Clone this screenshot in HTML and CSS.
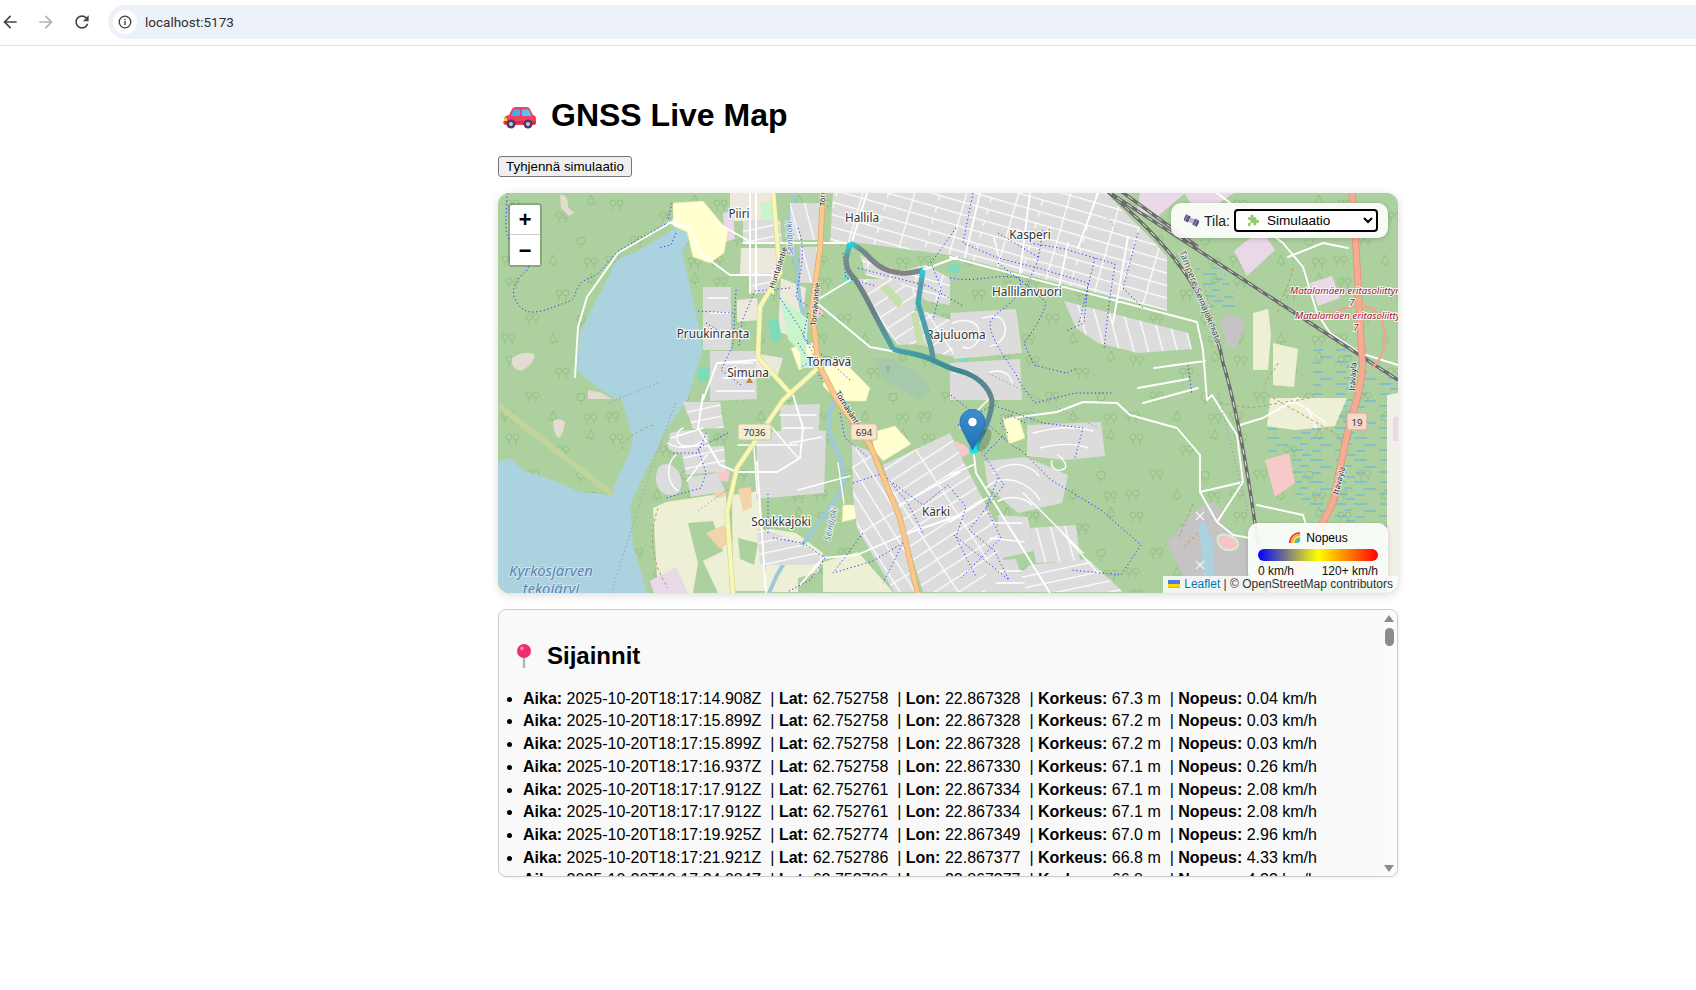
FILE: index.html
```html
<!DOCTYPE html>
<html lang="fi">
<head>
<meta charset="utf-8">
<title>GNSS Live Map</title>
<link rel="stylesheet" href="styles.css">
</head>
<body>
<header class="browser-bar">
  <svg class="nav-icon" viewBox="0 0 24 24"><path class="ic-dark" d="M20 11H7.83l5.59-5.59L12 4l-8 8 8 8 1.41-1.41L7.83 13H20v-2z"/></svg>
  <svg class="nav-icon" viewBox="0 0 24 24"><path class="ic-off" d="M4 11h12.17l-5.59-5.59L12 4l8 8-8 8-1.41-1.41L16.17 13H4v-2z"/></svg>
  <svg class="nav-icon" viewBox="0 0 24 24"><path class="ic-dark" d="M17.65 6.35C16.2 4.9 14.21 4 12 4c-4.42 0-7.99 3.58-7.99 8s3.57 8 7.99 8c3.73 0 6.84-2.55 7.73-6h-2.08c-.82 2.33-3.04 4-5.65 4-3.31 0-6-2.69-6-6s2.69-6 6-6c1.66 0 3.14.69 4.22 1.78L13 11h7V4l-2.35 2.35z"/></svg>
  <div class="address">
    <span class="site-info"><svg viewBox="0 0 16 16" class="info-icon"><circle cx="8" cy="8" r="5.8" class="ic-ring"/><rect x="7.3" y="7" width="1.4" height="4" class="ic-fill"/><rect x="7.3" y="4.8" width="1.4" height="1.4" class="ic-fill"/></svg></span>
    <span class="url">localhost:5173</span>
  </div>
</header>

<main class="page">
  <h1 class="title">
    <svg class="car" viewBox="0 0 33 23"><path fill="#f4405c" d="M1 13c0-2 2-3.500 5-4l3-6c.6-1.300 2-2 3.500-2h11c1.500 0 2.800.700 3.500 2l3 6c2 .600 3 1.800 3 3.500V17c0 1-.800 2-2 2H3c-1.200 0-2-1-2-2z"/><path fill="#3fb0f5" d="M11 3.500h6v6.500H8z"/><path fill="#55c4fb" d="M19 3.500h5.500c.6 0 1 .3 1.300.8L28.500 10H19z"/><rect x="1" y="12" width="3" height="3" fill="#ffc83d"/><rect x="0.500" y="15" width="32" height="3" fill="#d92d4a"/><circle cx="8" cy="18" r="4.500" fill="#4b3a63"/><circle cx="8" cy="18" r="2" fill="#cfc6dc"/><circle cx="25" cy="18" r="4.500" fill="#4b3a63"/><circle cx="25" cy="18" r="2" fill="#cfc6dc"/></svg>
    <span>GNSS Live Map</span>
  </h1>
  <button class="clear-btn" type="button">Tyhjennä simulaatio</button>

  <section class="map">
    <svg class="tiles" viewBox="0 0 900 400" aria-hidden="true">
      <defs>
        <g id="t2"><circle cx="3" cy="4" r="3"/><circle cx="10" cy="4" r="3"/><path d="M3 7v5M10 7v5"/></g>
        <g id="t1"><path d="M5 0l4 9H1zM5 9v3"/></g>
        <g id="t3"><circle cx="5" cy="4" r="4"/><path d="M5 8v4"/></g>
        <pattern id="forest" width="104" height="78" patternUnits="userSpaceOnUse">
          <g class="tree">
            <use href="#t2" x="8" y="6"/><use href="#t2" x="58" y="18"/><use href="#t1" x="88" y="2"/>
            <use href="#t2" x="28" y="42"/><use href="#t3" x="78" y="44"/><use href="#t2" x="86" y="64"/><use href="#t1" x="50" y="62"/><use href="#t2" x="4" y="62"/>
          </g>
        </pattern>
        <pattern id="marsh" width="44" height="22" patternUnits="userSpaceOnUse">
          <path class="marsh-line" d="M2 3h10M20 3h13M10 9h8M30 10h12M1 15h12M22 16h9M12 20h9"/>
        </pattern>
        <pattern id="st17" width="50" height="12" patternUnits="userSpaceOnUse" patternTransform="rotate(16)">
          <rect width="50" height="12" class="res"/><path class="street" d="M0 .6h50M.6 0v12M25.600 0v6"/>
        </pattern>
        <pattern id="stN35" width="42" height="13" patternUnits="userSpaceOnUse" patternTransform="rotate(-33)">
          <rect width="42" height="13" class="res"/><path class="street" d="M0 .6h42M.6 0v13"/>
        </pattern>
        <pattern id="st55" width="60" height="13" patternUnits="userSpaceOnUse" patternTransform="rotate(58)">
          <rect width="60" height="13" class="res"/><path class="street" d="M0 .6h60M.6 0v13"/>
        </pattern>
        <pattern id="st75" width="36" height="14" patternUnits="userSpaceOnUse" patternTransform="rotate(75)">
          <rect width="36" height="14" class="res"/><path class="street" d="M0 .6h36"/>
        </pattern>
        <pattern id="st0" width="50" height="11" patternUnits="userSpaceOnUse" patternTransform="rotate(-12)">
          <rect width="50" height="11" class="res"/><path class="street" d="M0 .6h50"/>
        </pattern>
        <linearGradient id="rg1" gradientUnits="userSpaceOnUse" x1="352" y1="50" x2="402" y2="80"><stop offset="0" stop-color="#1fd7e3"/><stop offset=".2" stop-color="#748a8e"/><stop offset="1" stop-color="#857f80"/></linearGradient>
        <linearGradient id="rg2" gradientUnits="userSpaceOnUse" x1="402" y1="80" x2="425" y2="77"><stop offset="0" stop-color="#857f80"/><stop offset=".85" stop-color="#6d8d92"/><stop offset="1" stop-color="#1fd7e3"/></linearGradient>
        <linearGradient id="rg3" gradientUnits="userSpaceOnUse" x1="425" y1="77" x2="435" y2="164"><stop offset="0" stop-color="#1fd7e3"/><stop offset=".15" stop-color="#5f9aa3"/><stop offset=".35" stop-color="#3fa9b6"/><stop offset="1" stop-color="#5d949b"/></linearGradient>
        <linearGradient id="rg4" gradientUnits="userSpaceOnUse" x1="352" y1="50" x2="395" y2="157"><stop offset="0" stop-color="#1fd7e3"/><stop offset=".12" stop-color="#76898c"/><stop offset=".6" stop-color="#687f84"/><stop offset="1" stop-color="#47a3ad"/></linearGradient>
        <linearGradient id="rg5" gradientUnits="userSpaceOnUse" x1="395" y1="157" x2="476" y2="257"><stop offset="0" stop-color="#47a3ad"/><stop offset=".45" stop-color="#3d8790"/><stop offset=".8" stop-color="#66888c"/><stop offset=".95" stop-color="#4c8f98"/><stop offset="1" stop-color="#19dfe6"/></linearGradient>
        <linearGradient id="pinfill" x1="0" y1="0" x2="0" y2="1"><stop offset="0" stop-color="#3f8fd0"/><stop offset="1" stop-color="#1f6fb2"/></linearGradient>
      </defs>

      <rect class="land" width="900" height="400"/>
      <rect fill="url(#forest)" width="900" height="400"/>

      <!-- marsh -->
      <path fill="url(#marsh)" d="M695 67l30 10 18 38-30 0zM815 154l50 0 35 30v25h-85zM769 202h120v135l-50 0-70-60z"/>

      <!-- farmland and light ground -->
      <path class="farm" d="M155 315l13-6 60-9 4 100h-72zM234 302l28-4 6 100h-33zM268 335l30 5 27 20-10 39h-47zM325 369l35-10 35 40h-70zM755 120l15-4 3 25-3 36h-15zM775 150l25 6-4 38-21-2zM772 205l77 0-12 28-40 4-28-4z"/>
      <path class="farm-green" d="M190 330l25-2 10 30-20 10 15 32h-25l5-30zM240 345l20 5-4 22-14-6zM300 385l20-6 4 20h-24z"/>
      <path class="beige" d="M232 0h43l5 28h-48zM243 55h35l4 26h-40zM239 107l20-2 2 22-22 2zM283 85l25 10-6 50-22-6zM255 160l30 5-6 20-25-8z"/>
      <path class="beige-light" d="M889 202l11-2v200h-11z"/>
      <path class="lilac" d="M152 388l26-14 12 26h-34zM642 0h45l-28 24-20-6zM686 0h50l-18 12-24 0zM736 58l27-22 14 21-28 26zM812 90l22-7 8 22-22 8zM895 225l5-2v25h-5zM225 20l10-2 2 28-10 3z"/>

      <!-- water -->
      <path class="water" d="M177 35L189 33 194 40 184 60 192 94 200 130 205 157 199 174 189 207 169 235 149 275 132 312 135 352 149 400H0V269L12 265 25 277 59 289 82 299 112 302 132 259 135 245 122 202 119 207 100 195 79 177 82 140 95 114 119 67 142 57z"/>
      <path class="water-thin" d="M297 3c-8 18-6 40 0 60 4 18 2 40 8 58l5 40 20 28M337 205c-5 10-9 25-4 40 4 12 16 26 12 45-3 14-12 22-22 36-10 15-18 28-32 36l-12 20-8 18"/>
      <path class="rock" d="M14 165c6-5 14-6 22-4 2 6-5 12-11 16-6 2-13-4-11-12zM55 228c4-3 9-2 12 1-1 6-2 13-6 16-4-2-6-10-6-17zM62 2c6-2 9 6 8 12l6 6-5 3-8-8zM90 197l14 3 10 6H90z"/>

      <!-- retail, parks -->
      <path class="retail" d="M175 10l30-2 25 30-4 22-14 10-17-6-6-25-14-6zM325 174l22-4 25 25-4 13h-28l-15-15zM375 239l22-6 16 18-28 17-10-12zM293 155l25-6 5 18-22 10zM345 312h21l-2 12-20 5zM505 225l16 0 6 20-16 6zM608 58l14-3 2 10-14 5z"/>
      <path class="park" d="M262 10l13-2 4 28-14 2zM282 104l28 22-2 40-18-20zM300 130l10 35 18 10-25 0z"/>
      <path class="teal" d="M270 128l10-4 4 22-10 4zM200 175l12-2-2 16-10 0zM346 80l10 1-2 10-8-2zM438 28l15-2 2 8-14 3zM543 45l11 3-2 7-11-2zM570 70l8 2-1 5-8-2zM470 20l14 3-2 6-12-2zM458 160l14 2-2 8-12-3zM452 70l12 2-4 9-10-3zM445 310l16-6-2 12-12 4z"/>
      <path class="pink" d="M219 276l13 2-2 11-14-2zM456 248l11 4 6 7-10 6-13-11zM767 267l24-7 6 30-20 14zM312 110l14 10-6 5-10-6zM526 0l10 0-3 17-9-2zM420 322l12-2 2 8-12 3z"/>
      <path class="tan" d="M215 296l10-1 4 8-12 2zM240 296l13-2 1 20-9 4zM208 340l18-8 8 16-12 8z"/>

      <!-- residential blocks with street grids -->
      <path fill="url(#st17)" d="M452 0H609C630 25 655 45 669 64V118L452 62zM335 0H452V62L354 49 332 50zM362 62L385 72 402 78 428 72 452 85V112L429 108 400 90 368 82z"/>
      <path fill="url(#stN35)" d="M355 86L394 86 422 103 416 118 440 150 400 152 385 132zM405 118L425 118 462 130V165L437 160 425 150zM385 272L452 240 462 262 505 345V399H425L405 335z"/>
      <path fill="url(#st55)" d="M354 252L375 259 405 335 419 399H396L359 335 355 302z"/>
      <path fill="url(#st75)" d="M566 108L690 140 694 156 640 160 600 150 578 135zM292 10L322 10 320 47 292 47zM302 54L322 54 317 90 302 90zM532 335L578 332 582 368 538 370z"/>
      <path fill="url(#st0)" d="M185 209L222 209 226 235 195 236zM183 255L226 253 228 278 188 282zM245 27h37l2 23h-39zM252 80h23v20h-23zM259 335L283 342 320 360 325 372 262 372zM532 372L590 366 625 399H500z"/>

      <!-- curvy neighbourhoods -->
      <path class="res" d="M172 240c12-4 32-4 38 2 2 8-4 16-16 18-10 2-22 0-24-6zM160 276c4-8 14-6 20 2 6 10 4 22-4 24-14 2-22-12-16-26zM189 284l30-4 8 18-34 6zM259 240l44-4 25 2-2 62-68 6zM282 212l40-1-2 42-36 2zM205 94h28v63h-28zM212 158l45 0 2 48-47 2zM452 120l66-4 6 44-68 6zM452 170l70-4 2 41h-72zM529 232l74-3 4 34-40 4-38-4zM486 268l42-4 42 18-6 28-44 10-30-26zM500 322l30 2 6 34-36 8zM488 368l30-2 10 33h-40z"/>

      <path class="quarry" d="M669 349L700 315 715 309 726 320 722 330 749 349V399H692zM722 130L730 120 742 124 747 130 739 154 730 154z"/>
      <path class="water" d="M701 330l7 0 2 10-7 4-3-7zM702 345l12-5 3 50 14 10h-24z"/>
      <path class="green-ov" d="M413 120l6 0 8 32-8 0zM382 95l8-4 15 18-5 6z"/>
      <path class="cemetery" d="M374 165L395 166 425 185 433 198 422 207 385 187z"/>

      <!-- curved local streets -->
      <path class="road-w" d="M185 235c-8 4-8 14 0 18h26M178 262c-10 8-10 28 2 36M209 262l-20 26M170 250c8 6 26 6 34-2M240 252h60M255 240l4 60M270 230l30 35M282 222h36M285 235h30M292 250l32-6M210 105h20M212 120h20M214 140h18M220 170h35M225 185h30M218 198h38M455 130c8-4 24-4 26 8 2 12-8 20-16 16M485 125c10-3 20-3 22 8s-6 18-14 20M456 180c12-4 24-2 26 12M490 180c10-4 22-2 24 10M535 240c20-5 40-8 60-2M542 255c16-4 32-6 48 0M495 280c14-12 34-12 46 3M488 295c14-14 40-10 54 12M500 308c12-6 26-4 34 4M492 330l32 0M492 345l34 4M500 378h24M498 390h28M560 262c6 4 10 12 6 14-8 4-14-2-12-8"/>
      <!-- main streets -->
      <path class="road-w2" d="M177 27L120 60 89 104 80 134 77 184M169 29L192 35 202 60 232 82H275M219 30L249 47M245 50H325L352 50M354 49L369 0M425 77L459 64M319 110L372 154 425 164M319 107L352 87M219 170L259 167M219 170L205 207M252 0V100M258 0V100M275 82V100M205 202L200 235 222 272 239 279H279L302 265 305 235 295 202M259 269L268 399M462 279L402 312M462 322L405 342 359 362 325 365 302 392M476 262L478 280 552 400M452 282L475 272M452 329L489 305M452 64L699 129 705 157 709 207 714 202 739 242 745 289 719 329 735 342 752 345M702 262L702 299 719 329M702 299L745 289M559 219L585 209 619 210 632 222 679 235 702 262M514 225L559 219M759 312L805 322 809 335M742 232L765 225 800 205M719 0L785 50 805 74 819 120 832 140 862 160 900 172M482 0L467 64M532 0L522 80M630 44L615 130M570 50L560 100M600 0L580 55M640 195L690 186M656 175L707 168M645 210L700 195M790 64L825 50 850 55"/>
      <path class="road-w" d="M492 205l-30 30M500 62l-4-18M205 235l-32 10M340 270l6 40M300 297l52-14M525 300l60 60M600 380l-40-45M780 210l20 0 28 20M810 215l8 20"/>

      <!-- dotted footpaths -->
      <path class="foot" d="M174 10L169 30 122 57C108 68 105 80 92 85 75 90 80 105 72 108 45 118 30 126 19 110 13 100 14 90 29 77 37 65 30 45 12 47 5 40 9 20 9 0M178 40l-5 12-13 3M292 95l-35 3-13 30-3 25M300 35c10 25 0 50 -2 70l30 20M310 120l-5 25 25 22 22 20M238 97l-3 55-12 25 20 15M230 240l-30 15 8 25-5 15 -35 10M175 260l25 0 8-20M342 220l5 25 12 10 12 10M355 290l30-10 25 30 15 30M365 340l-30 40 40-12 30-18 -20 40M275 345l30 5 22 15-15 22-23 12M270 340l0-40M458 35l-25 35 10 25 -8 32M360 75l30 8 40 10 35 20M475 0l-10 50 35 15 40 10 50 15 -4 40-18 8M532 50l35 6 50 15-6 40-5 45M500 70c25 20 40 30 48 40-5 18-15 30-22 40l10 22 32 8 12-5M452 85c30 5 45-5 70 0 5 25-25 30-30 45 0 20 25 45 30 60l15 20 40-10 38 0M545 37l-5 30-15 35M500 40l40 24M597 65l-16 65M640 40l-15 55 20 20M453 202l30 25c20 12 25 25 40 30l30 30 50 30 40 35 -20 30 -50-5M456 342l55 45 -15-30 -25-20 35-45-20-30 20-20M690 172l4 30M460 232l35-20 50 18 40 5-8 30M510 240l-8-10 10-8 15 8M395 290l30 22 25-20 18 22 -10 30 20 40M345 60l3 25 30 8M282 105l20 30 15 30 -15 10M200 118l35 2M208 130l25 15M300 150l26 40M500 285l-12 30 15 30-40 40"/>
      <path class="path-brown" d="M155 232c-15 5-35 18-30 24M160 315c-10 30-6 55 10 80M795 75c-5 25-15 30-15 45M780 170c-4 10-12 14-14 25M700 340l-14 14M695 311l-15 35M770 202l70 40M722 210l30 5 60-10"/>
      <path class="path-grey" d="M178 210c-25 60-45 130-65 190M160 190l-50 20M610 25l10 15M490 180l50 25 60 30M705 90l20 70M720 200l30 120M200 318l30-22"/>
      <path class="meadow" d="M0 212L115 302"/>

      <!-- railways -->
      <path class="rail" d="M609 -2C670 50 712 100 725 170 733 195 745 250 754 310 758 340 764 370 768 400"/>
      <path class="rail-in" d="M609 -2C670 50 712 100 725 170 733 195 745 250 754 310 758 340 764 370 768 400"/>
      <path class="rail" d="M609 -2L900 187M620 -4L700 54"/>
      <path class="rail-in" d="M609 -2L900 187M620 -4L700 54"/>

      <!-- main roads -->
      <path class="trunk-c" d="M854 0L858 55 864 164C866 180 862 190 860 202L849 242 835 309 822 335 785 400"/>
      <path class="trunk" d="M854 0L858 55 864 164C866 180 862 190 860 202L849 242 835 309 822 335 785 400"/>
      <path class="ramp" d="M825 127c10-8 25-14 35-14 15 0 22 6 26 22 3 15-1 30-12 40"/>
      <path class="ter-c" d="M275 -2L282 80 262 114 260 164 292 200M320 175L285 207 239 275 229 319 235 402"/>
      <path class="ter" d="M275 -2L282 80 262 114 260 164 292 200M320 175L285 207 239 275 229 319 235 402"/>
      <path class="sec-c" d="M325 -2L322 57 314 114 320 170 339 207 372 252 402 325 420 402"/>
      <path class="sec" d="M325 -2L322 57 314 114 320 170 339 207 372 252 402 325 420 402"/>

      <!-- small map symbols -->
      <path class="peak" d="M248 190l3.500-6 3.500 6z"/>
      <path class="symbol-w" d="M698 319l8 8M706 319l-8 8M698 368l8 8M706 368l-8 8"/>
      <path class="track" d="M722 342c6-2 16 2 18 8 1 6-8 9-14 6-6-2-9-12-4-14z"/>
      <path class="cross" d="M390 172v8M387 175h6"/>

      <!-- labels -->
      <g class="lbl">
        <text x="241" y="25">Piiri</text>
        <text x="364" y="29">Hallila</text>
        <text x="215" y="145">Pruukinranta</text>
        <text x="331" y="173">Törnävä</text>
        <text x="250" y="184">Simuna</text>
        <text x="458" y="146">Rajuluoma</text>
        <text x="529" y="103">Hallilanvuori</text>
        <text x="532" y="46">Kasperi</text>
        <text x="283" y="333">Soukkajoki</text>
        <text x="438" y="323">Kärki</text>
      </g>
      <g class="lbl-water">
        <text x="53" y="383">Kyrkösjärven</text>
        <text x="53" y="401">tekojärvi</text>
      </g>
      <text class="lbl-river" transform="translate(295 62) rotate(-92)">Seinäjoki</text>
      <text class="lbl-river" transform="translate(332 348) rotate(-78)">Seinäjoki</text>
      <g class="lbl-road">
        <text transform="translate(276 96) rotate(-72)">Huntalantie</text>
        <text transform="translate(318 133) rotate(-85)">Törnäväntie</text>
        <text transform="translate(337 200) rotate(58)">Törnäväntie</text>
        <text transform="translate(857 198) rotate(-87)">Itäväylä</text>
        <text transform="translate(840 302) rotate(-75)">Itäväylä</text>
        <text transform="translate(327 13) rotate(-90)">Törnäväntie</text>
      </g>
      <text class="lbl-rail" transform="translate(681 59) rotate(68)">Tampere-Seinäjoki-rata</text>
      <g class="lbl-red">
        <text x="792" y="101">Matalamäen eritasoliittymä</text>
        <text x="797" y="126">Matalamäen eritasoliittymä</text>
        <text class="lbl-red-n" x="854" y="113">7</text>
        <text class="lbl-red-n" x="858" y="138">7</text>
      </g>
      <g class="shield shield-g"><rect x="240" y="231" width="33" height="16" rx="2"/><text x="256.500" y="243">7036</text></g>
      <g class="shield shield-o"><rect x="353" y="231" width="26" height="16" rx="2"/><text x="366" y="243">694</text></g>
      <g class="shield shield-r"><rect x="849" y="220" width="20" height="17" rx="2"/><text x="859" y="232.500">19</text></g>

      <!-- route -->
      <g class="route">
        <path stroke="url(#rg1)" d="M352 50C360 54 366 58 370 63 376 70 382 75 392 78L402 80"/>
        <path stroke="url(#rg2)" d="M402 80C410 81 418 79 425.100 77"/>
        <path stroke="url(#rg3)" d="M425 77L420 110 426 130 433 154 435 165"/>
        <path stroke="url(#rg4)" d="M352 50L348 66C348 76 352 81 357 86 363 95 370 108 375 118L395 156"/>
        <path stroke="url(#rg5)" d="M395 156C405 160 418 160 430 165 442 170 452 176 462 178 478 182 492 194 494 208 494 222 486 238 476 257"/>
      </g>
      <path class="route-end" d="M471 254h10l-1 6h-8z"/>
      <ellipse class="pin-shadow" cx="486" cy="247" rx="6" ry="12" transform="rotate(25 486 247)"/>
      <path class="pin" d="M474.500 216.500c-7 0-12.500 5.500-12.500 12.500 0 4 1.500 7 4 11.500l8.500 16.500 8.500-16.500c2.500-4.500 4-7.500 4-11.500 0-7-5.500-12.500-12.500-12.500z"/>
      <circle class="pin-dot" cx="474.500" cy="229" r="4.200"/>
    </svg>

    <div class="zoom-ctl">
      <a class="zoom-btn zoom-in">+</a>
      <a class="zoom-btn">&minus;</a>
    </div>

    <div class="mode-ctl">
      <svg class="sat" viewBox="0 0 16 16"><g transform="rotate(25 8 8)"><rect x="0" y="4.500" width="5.500" height="7" fill="#5b4f86"/><rect x="10.500" y="4.500" width="5.500" height="7" fill="#5b4f86"/><rect x="5.500" y="5.500" width="5" height="5" fill="#b9b3c8"/><path d="M2 4.500v7M13 4.500v7" stroke="#b8b0d0" stroke-width=".8"/></g></svg>
      <label class="mode-label" for="mode">Tila:</label>
      <span class="select-wrap">
        <svg class="puzzle" viewBox="0 0 14 14"><path fill="#8fce6a" d="M1 3.500h3c-.6-2 .4-3 1.500-3s2.200 1 1.500 3h3v3c2-.6 3 .4 3 1.500s-1 2.100-3 1.500v3H7c.6-2-.4-3-1.500-3S3.300 11 4 13H1V9.500c2 .6 3-.4 3-1.500S3 6 1 6.500z"/></svg>
        <select class="mode" id="mode"><option>Simulaatio</option><option>Live</option></select>
      </span>
    </div>

    <div class="legend">
      <div class="legend-title">
        <svg class="rainbow" viewBox="0 0 14 14"><path d="M2 13C2 7 6 2.500 13 2" stroke="#e8414a"/><path d="M4 13C4 8.500 7.500 4.500 13 4" stroke="#f9a825"/><path d="M6 13C6 9.500 9 6.500 13 6" stroke="#ffe14d"/><path d="M8 13C8 10.500 10 8.500 13 8" stroke="#4cc36a"/><path d="M10 13C10 11.500 11 10.500 13 10" stroke="#3aa0f0"/></svg>
        <span>Nopeus</span>
      </div>
      <div class="legend-bar"></div>
      <div class="legend-scale"><span>0 km/h</span><span>120+ km/h</span></div>
    </div>

    <div class="attribution">
      <svg class="flag" viewBox="0 0 12 8"><rect width="12" height="4" fill="#4C7BE1"/><rect y="4" width="12" height="3" fill="#FFD500"/><rect y="7" width="12" height="1" fill="#E0BC00"/></svg>
      <a class="leaflet-link">Leaflet</a> <span class="sep">|</span> © OpenStreetMap contributors
    </div>
  </section>

  <section class="locations">
    <div class="locations-body">
      <h2 class="loc-title">
        <svg class="pin-emoji" viewBox="0 0 14 24"><rect x="5.800" y="11" width="2.400" height="13" fill="#b5b3c4"/><circle cx="7" cy="7" r="7" fill="#ee2f6b"/><circle cx="5" cy="4.500" r="1.800" fill="#fb8fb0"/></svg>
        <span>Sijainnit</span>
      </h2>
      <ul class="loc-list">
        <li><b>Aika:</b> 2025-10-20T18:17:14.908Z &nbsp;| <b>Lat:</b> 62.752758 &nbsp;| <b>Lon:</b> 22.867328 &nbsp;| <b>Korkeus:</b> 67.3 m &nbsp;| <b>Nopeus:</b> 0.04 km/h</li>
        <li><b>Aika:</b> 2025-10-20T18:17:15.899Z &nbsp;| <b>Lat:</b> 62.752758 &nbsp;| <b>Lon:</b> 22.867328 &nbsp;| <b>Korkeus:</b> 67.2 m &nbsp;| <b>Nopeus:</b> 0.03 km/h</li>
        <li><b>Aika:</b> 2025-10-20T18:17:15.899Z &nbsp;| <b>Lat:</b> 62.752758 &nbsp;| <b>Lon:</b> 22.867328 &nbsp;| <b>Korkeus:</b> 67.2 m &nbsp;| <b>Nopeus:</b> 0.03 km/h</li>
        <li><b>Aika:</b> 2025-10-20T18:17:16.937Z &nbsp;| <b>Lat:</b> 62.752758 &nbsp;| <b>Lon:</b> 22.867330 &nbsp;| <b>Korkeus:</b> 67.1 m &nbsp;| <b>Nopeus:</b> 0.26 km/h</li>
        <li><b>Aika:</b> 2025-10-20T18:17:17.912Z &nbsp;| <b>Lat:</b> 62.752761 &nbsp;| <b>Lon:</b> 22.867334 &nbsp;| <b>Korkeus:</b> 67.1 m &nbsp;| <b>Nopeus:</b> 2.08 km/h</li>
        <li><b>Aika:</b> 2025-10-20T18:17:17.912Z &nbsp;| <b>Lat:</b> 62.752761 &nbsp;| <b>Lon:</b> 22.867334 &nbsp;| <b>Korkeus:</b> 67.1 m &nbsp;| <b>Nopeus:</b> 2.08 km/h</li>
        <li><b>Aika:</b> 2025-10-20T18:17:19.925Z &nbsp;| <b>Lat:</b> 62.752774 &nbsp;| <b>Lon:</b> 22.867349 &nbsp;| <b>Korkeus:</b> 67.0 m &nbsp;| <b>Nopeus:</b> 2.96 km/h</li>
        <li><b>Aika:</b> 2025-10-20T18:17:21.921Z &nbsp;| <b>Lat:</b> 62.752786 &nbsp;| <b>Lon:</b> 22.867377 &nbsp;| <b>Korkeus:</b> 66.8 m &nbsp;| <b>Nopeus:</b> 4.33 km/h</li>
        <li><b>Aika:</b> 2025-10-20T18:17:24.084Z &nbsp;| <b>Lat:</b> 62.752786 &nbsp;| <b>Lon:</b> 22.867377 &nbsp;| <b>Korkeus:</b> 66.8 m &nbsp;| <b>Nopeus:</b> 4.33 km/h</li>
      </ul>
    </div>
    <div class="scrollbar">
      <span class="arrow-up"></span>
      <span class="thumb"></span>
      <span class="arrow-down"></span>
    </div>
  </section>
</main>
</body>
</html>
```
FILE: styles.css
```css
* { box-sizing: border-box; }
html, body { margin: 0; padding: 0; background: #fff; }
body { font-family: "Liberation Sans", Arial, sans-serif; color: #000; overflow: hidden; height: 990px; }

/* browser chrome */
.browser-bar { display: flex; align-items: center; height: 46px; padding: 0 0 1px 0; border-bottom: 1px solid #e3e3e3; background: #fff; }
.nav-icon { width: 20px; height: 20px; margin-right: 16px; flex: none; }
.ic-dark { fill: #474747; }
.ic-off { fill: #b2b2b2; }
.address { display: flex; align-items: center; flex: 1; height: 34px; border-radius: 17px 0 0 17px; background: #edf2fa; padding-left: 5px; }
.site-info { display: flex; align-items: center; justify-content: center; width: 24px; height: 24px; border-radius: 50%; background: #fff; }
.info-icon { width: 16px; height: 16px; }
.ic-ring { fill: none; stroke: #3c3c3c; stroke-width: 1.3; }
.ic-fill { fill: #3c3c3c; }
.url { margin-left: 8px; font: 13.500px Roboto, "Liberation Sans", sans-serif; color: #303030; }

/* page */
.page { width: 900px; margin-left: 498px; }
.title { display: flex; align-items: center; gap: 15px; height: 37px; margin: 51px 0 0 0; font-size: 32px; font-weight: 700; line-height: 37px; }
.car { width: 33px; height: 23px; margin-left: 5px; margin-top: 3px; flex: none; }
.clear-btn { display: block; width: 134px; height: 21px; margin: 22px 0 16px; padding: 0; font: 13.333px "Liberation Sans", Arial, sans-serif; color: #000; background: #efefef; border: 1px solid #767676; border-radius: 3px; }

/* map */
.map { position: relative; width: 900px; height: 400px; border-radius: 12px; overflow: hidden; box-shadow: 0 2px 10px rgba(0,0,0,.15); background: #add19e; }
.tiles { display: block; width: 900px; height: 400px; }
.land { fill: #add19e; }
.tree { fill: none; stroke: #93bd85; stroke-width: .9; }
.marsh-line { stroke: #5aaff0; stroke-width: 1; fill: none; }
.res { fill: #dcdcdc; }
.street { stroke: #fff; stroke-width: 1.200; fill: none; }
.water { fill: #aad3df; }
.water-thin { fill: none; stroke: #9ec9d8; stroke-width: 4; }
.rock { fill: #e4dcd0; }
.farm { fill: #eef0d5; }
.farm-green { fill: #add19e; }
.beige { fill: #ece9dc; }
.beige-light { fill: #f2efe9; }
.lilac { fill: #e9d9e8; }
.retail { fill: #ffffd0; stroke: #efe4a5; stroke-width: .6; }
.park { fill: #c8f5cc; }
.teal { fill: #7fdcb8; }
.pink { fill: #f7c9c9; }
.tan { fill: #f3d3a8; }
.quarry { fill: #c5c3c3; }
.green-ov { fill: #c7dfa8; }
.cemetery { fill: #a6c9ac; }
.meadow { fill: none; stroke: #c0d49c; stroke-width: 6; }
.road-w { fill: none; stroke: #fff; stroke-width: 1.400; stroke-linecap: round; stroke-linejoin: round; }
.road-w2 { fill: none; stroke: #fff; stroke-width: 1.900; stroke-linecap: round; stroke-linejoin: round; }
.foot { fill: none; stroke: #2f2fff; stroke-width: 1; stroke-dasharray: 1.200 2.600; }
.path-brown { fill: none; stroke: #b79a6b; stroke-width: 1; stroke-dasharray: 3 2.500; }
.path-grey { fill: none; stroke: #a79ab7; stroke-width: 1; stroke-dasharray: 1.500 2.500; }
.rail { fill: none; stroke: #6c6c6c; stroke-width: 3.400; }
.rail-in { fill: none; stroke: #e8e8e8; stroke-width: 1; stroke-dasharray: 6 6; }
.trunk-c { fill: none; stroke: #e38d76; stroke-width: 7; }
.trunk { fill: none; stroke: #f6ab93; stroke-width: 5.600; }
.ramp { fill: none; stroke: #f2a48d; stroke-width: 2.400; }
.ter-c { fill: none; stroke: #d8d79d; stroke-width: 5.200; }
.ter { fill: none; stroke: #f7f8b4; stroke-width: 4; }
.sec-c { fill: none; stroke: #dfa76b; stroke-width: 5.800; }
.sec { fill: none; stroke: #f8c98b; stroke-width: 4.400; }
.peak { fill: #b98a45; }
.symbol-w { fill: none; stroke: #f4f4f4; stroke-width: 1.400; }
.track { fill: #f6c3c9; stroke: #c8f5cc; stroke-width: 2; }
.cross { fill: none; stroke: #8cb39a; stroke-width: 1.400; }
.lbl text { font: 11.800px "Noto Sans", sans-serif; fill: #333; text-anchor: middle; paint-order: stroke; stroke: rgba(255,255,255,.85); stroke-width: 2.500px; }
.lbl-water text { font: italic 14.800px "Noto Sans", sans-serif; fill: #5e84b5; text-anchor: middle; paint-order: stroke; stroke: rgba(255,255,255,.4); stroke-width: 2px; }
.lbl-river { font: italic 8.500px "Noto Sans", sans-serif; fill: #5e84b5; paint-order: stroke; stroke: rgba(255,255,255,.6); stroke-width: 2px; }
.lbl-road text { font: 7.800px "Noto Sans", sans-serif; fill: #222; paint-order: stroke; stroke: rgba(255,255,255,.7); stroke-width: 1.600px; }
.lbl-rail { font: 9.200px "Noto Sans", sans-serif; fill: #555; paint-order: stroke; stroke: rgba(255,255,255,.7); stroke-width: 1.600px; }
.lbl-red text { font: italic 9.700px "Noto Sans", sans-serif; fill: #a3162e; paint-order: stroke; stroke: rgba(255,255,255,.85); stroke-width: 2px; }
.lbl-red .lbl-red-n { text-anchor: middle; }
.shield text { font: 9.600px "Noto Sans", sans-serif; fill: #333; text-anchor: middle; }
.shield-g rect { fill: #f1eed3; stroke: #c9c59c; }
.shield-o rect { fill: #f8e5cf; stroke: #d9b88f; }
.shield-r rect { fill: #f6d8cd; stroke: #d8a796; }
.route path { fill: none; stroke-width: 5.200; stroke-linejoin: round; stroke-linecap: butt; }
.route-end { fill: #1fe0e6; }
.pin-shadow { fill: rgba(0,0,0,.18); }
.pin { fill: url(#pinfill); stroke: #1c6aa8; stroke-width: .8; }
.pin-dot { fill: #fff; }

/* map controls */
.zoom-ctl { position: absolute; top: 10px; left: 10px; width: 34px; height: 64px; border: 2px solid rgba(0,0,0,.2); border-radius: 4px; background-clip: padding-box; display: flex; flex-direction: column; }
.zoom-btn { display: block; width: 30px; height: 30px; background: #fff; color: #000; text-align: center; font: bold 22px/35px "Liberation Mono", monospace; overflow: hidden; }
.zoom-in { border-bottom: 1px solid #ccc; border-radius: 2px 2px 0 0; line-height: 34px; }
.mode-ctl { position: absolute; top: 10px; right: 10px; width: 217px; height: 35px; display: flex; align-items: center; padding-left: 13px; border-radius: 10px; background: rgba(255,255,255,.9); box-shadow: 0 1px 5px rgba(0,0,0,.2); }
.sat { width: 15px; height: 15px; flex: none; }
.mode-label { margin-left: 5px; font-size: 14px; color: #222; }
.select-wrap { position: relative; display: block; margin-left: 4px; }
.mode { display: block; width: 144px; height: 23px; padding: 0 0 0 27px; font: 13.600px "Liberation Sans", Arial, sans-serif; color: #000; background: #fff; border: 2px solid #000; border-radius: 4px; outline: none; }
.puzzle { position: absolute; top: 5px; left: 13px; width: 13px; height: 13px; pointer-events: none; }

.legend { position: absolute; right: 10px; bottom: 10px; width: 140px; height: 60px; padding: 7px 10px 0; border-radius: 10px; background: rgba(255,255,255,.9); box-shadow: 0 1px 5px rgba(0,0,0,.15); font-size: 12px; color: #000; }
.legend-title { display: flex; align-items: center; justify-content: center; gap: 5px; height: 15px; }
.rainbow { width: 13px; height: 13px; fill: none; stroke-width: 2; }
.legend-bar { height: 12px; margin-top: 4px; border-radius: 6px; background: linear-gradient(90deg, #0000ff 0%, #ffff00 50%, #ff0000 100%); }
.legend-scale { display: flex; justify-content: space-between; margin-top: 4px; line-height: 13px; color: #111; }
.attribution { position: absolute; right: 0; bottom: 0; height: 17px; padding: 0 5px; background: rgba(255,255,255,.8); font-size: 12px; line-height: 17px; color: #333; white-space: nowrap; }
.flag { display: inline-block; width: 12px; height: 8px; margin-right: 1px; }
.leaflet-link { color: #0078a8; }

/* locations */
.locations { position: relative; width: 900px; height: 268px; margin-top: 16px; border: 1px solid #ccc; border-radius: 8px; background: #f9f9f9; overflow: hidden; box-shadow: 1px 1px 3px rgba(0,0,0,.06); }
.locations-body { padding: 34px 0 0 12px; }
.loc-title { display: flex; align-items: center; gap: 16px; margin: 0 0 20.700px 0; height: 24px; font-size: 24px; font-weight: 700; line-height: 24px; }
.pin-emoji { width: 14px; height: 24px; margin-left: 6px; flex: none; }
.loc-list { list-style: disc; margin: 0; padding: 0 0 0 12px; font-size: 16px; line-height: 19px; white-space: nowrap; }
.loc-list li { margin-bottom: 3.710px; }
.scrollbar { position: absolute; top: 0; right: 0; bottom: 0; width: 15px; background: #fbfbfb; }
.thumb { position: absolute; top: 18px; left: 3px; width: 9px; height: 18px; border-radius: 5px; background: #8b8b8b; }
.arrow-up { position: absolute; top: 5px; left: 2px; width: 0; height: 0; border-left: 5px solid transparent; border-right: 5px solid transparent; border-bottom: 7px solid #8b8b8b; }
.arrow-down { position: absolute; bottom: 4px; left: 2px; width: 0; height: 0; border-left: 5px solid transparent; border-right: 5px solid transparent; border-top: 7px solid #8b8b8b; }
```
